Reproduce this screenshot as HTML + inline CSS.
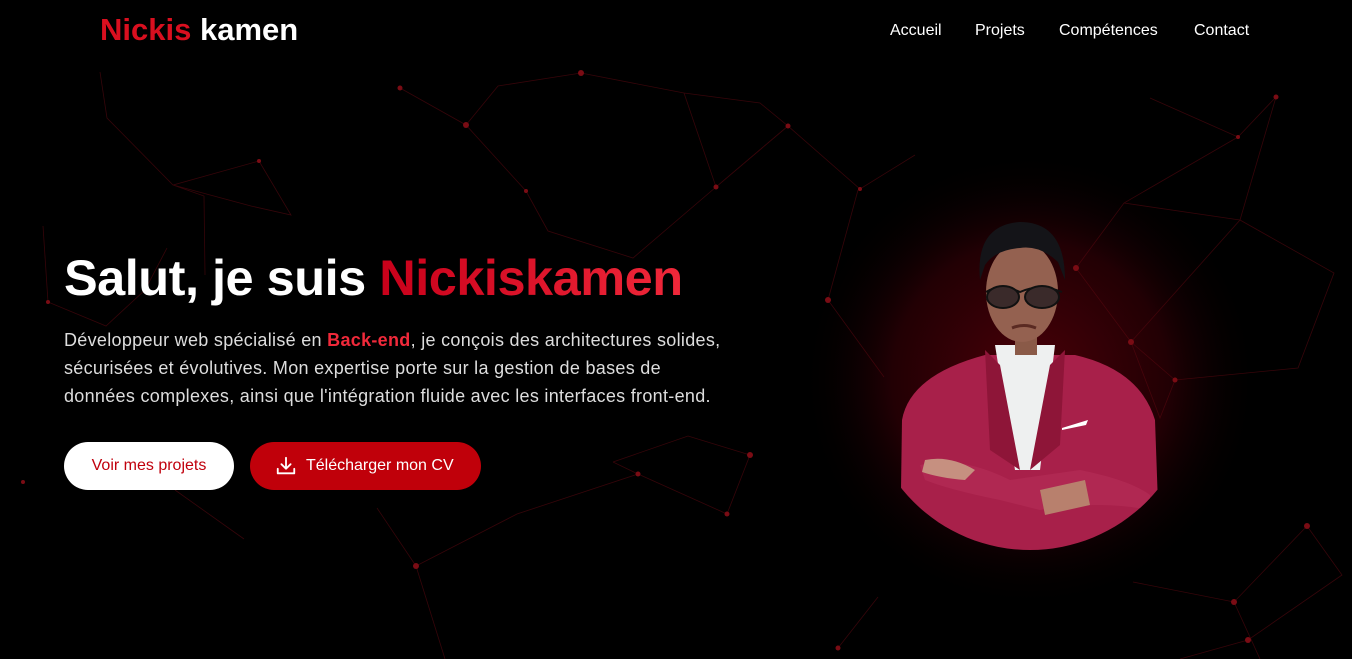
<!DOCTYPE html>
<html><head><meta charset="utf-8"><style>
*{margin:0;padding:0;box-sizing:border-box}
body{width:1352px;height:659px;background:#000;overflow:hidden;font-family:"Liberation Sans",sans-serif;position:relative;color:#fff}
svg.bg{position:absolute;left:0;top:0}
.logo{position:absolute;left:100px;top:12px;font-size:31px;font-weight:bold;letter-spacing:0}
.logo .r{color:#d90f1f}
nav{position:absolute;top:22px;font-size:16px}
nav a{position:absolute;color:#fff;text-decoration:none;white-space:nowrap}
h1{position:absolute;left:64px;top:248px;font-size:50.5px;font-weight:bold;white-space:nowrap;letter-spacing:-0.5px}
h1 span{background:linear-gradient(90deg,#c8001a,#f0283a);-webkit-background-clip:text;background-clip:text;color:transparent}
p{position:absolute;left:64px;top:326px;font-size:18px;letter-spacing:0.3px;line-height:28px;color:#ddd;white-space:nowrap}
p b{color:#f0293a}
.b1{position:absolute;left:64px;top:442px;width:170px;height:48px;border-radius:24px;background:#fff;color:#c0000c;font-size:16px;text-align:center;line-height:48px}
.b2{position:absolute;left:250px;top:442px;width:231px;height:48px;border-radius:24px;background:#c0000a;color:#fff;font-size:16px;line-height:48px;padding-left:56px}
.b2 svg{position:absolute;left:25px;top:13px}
</style></head><body>
<svg class="bg" width="1352" height="659">
<defs>
<radialGradient id="g" cx="1030" cy="380" r="230" gradientUnits="userSpaceOnUse">
<stop offset="0" stop-color="#4a0008"/><stop offset="0.6" stop-color="#220004"/><stop offset="1" stop-color="#000" stop-opacity="0"/></radialGradient>
<clipPath id="c"><circle cx="1030" cy="385" r="165"/></clipPath>
</defs>
<rect x="780" y="140" width="500" height="480" fill="url(#g)"/>
<g stroke="#5a0810" stroke-width="0.8" fill="none" opacity="0.6">
<polyline points="100,72 107,118 173,185 259,161 291,215 251,206 173,185 204,196 205,275"/>
<polyline points="43,226 48,302 106,326 145,290 167,248"/>
<polyline points="400,88 466,125 526,191 548,231 633,258 716,187 788,126 860,189 915,155"/>
<polyline points="466,125 498,86 581,73 684,93 760,103 788,126 716,187 684,93"/>
<polyline points="1150,98 1238,137 1276,97 1240,220 1334,273 1298,368 1175,380 1131,342 1076,268 1124,203 1238,137"/>
<polyline points="1124,203 1240,220 1131,342 1160,418 1175,380"/>
<polyline points="828,300 858,190"/><polyline points="884,377 828,300"/>
<polyline points="613,462 688,436 750,455 727,514 638,474 613,462"/>
<polyline points="377,508 416,566 517,514 638,474"/><polyline points="416,566 445,659"/>
<polyline points="1133,582 1234,602 1307,526 1342,575 1248,640 1180,659"/><polyline points="1234,602 1260,659"/>
<polyline points="838,648 878,597"/><polyline points="175,490 244,539"/>
</g>
<g fill="#7a0c14">
<circle cx="466" cy="125" r="3"/><circle cx="581" cy="73" r="3"/><circle cx="400" cy="88" r="2.5"/><circle cx="788" cy="126" r="2.5"/><circle cx="716" cy="187" r="2.5"/><circle cx="526" cy="191" r="2"/><circle cx="860" cy="189" r="2"/><circle cx="1076" cy="268" r="3"/><circle cx="1131" cy="342" r="3"/><circle cx="1175" cy="380" r="2.5"/><circle cx="1276" cy="97" r="2.5"/><circle cx="1238" cy="137" r="2"/><circle cx="828" cy="300" r="3"/><circle cx="638" cy="474" r="2.5"/><circle cx="750" cy="455" r="3"/><circle cx="727" cy="514" r="2.5"/><circle cx="416" cy="566" r="3"/><circle cx="1307" cy="526" r="3"/><circle cx="1234" cy="602" r="3"/><circle cx="1248" cy="640" r="3"/><circle cx="48" cy="302" r="2"/><circle cx="259" cy="161" r="2"/><circle cx="838" cy="648" r="2.5"/><circle cx="23" cy="482" r="2"/>
</g>
<g clip-path="url(#c)">
<path d="M902,420 Q910,375 985,355 L1075,355 Q1140,370 1155,420 L1160,560 L900,560 Z" fill="#a8204a"/>
<path d="M995,345 L1055,345 L1040,470 L1015,470 Z" fill="#eef0f0"/>
<path d="M985,350 L1000,365 L1020,470 L990,450 Z M1065,350 L1050,365 L1030,470 L1060,445 Z" fill="#8e1538"/>
<path d="M920,465 Q960,455 1010,480 L1080,470 Q1130,480 1150,495 L1150,510 Q1100,500 1040,510 L1000,500 Q950,490 925,480 Z" fill="#b02852"/>
<path d="M925,460 Q950,455 975,470 L965,480 Q940,478 922,472 Z" fill="#c69080"/>
<path d="M1040,490 L1085,480 L1090,505 L1045,515 Z" fill="#b8806d"/>
<path d="M1062,428 L1088,420 L1086,425 L1062,430 Z" fill="#fff"/>
</g>
<rect x="1015" y="330" width="22" height="25" fill="#8a5a48"/>
<ellipse cx="1022" cy="292" rx="36" ry="50" fill="#946150"/>
<path d="M980,280 Q975,225 1020,222 Q1065,222 1065,280 L1058,262 Q1040,245 1020,248 Q995,250 985,265 Z" fill="#141418"/>
<path d="M986,292 Q1000,283 1020,292 Q1040,283 1062,292" stroke="#111" stroke-width="2" fill="none"/>
<ellipse cx="1003" cy="297" rx="16" ry="11" fill="#3a2a2a" stroke="#111" stroke-width="2"/>
<ellipse cx="1042" cy="297" rx="17" ry="11" fill="#3a2a2a" stroke="#111" stroke-width="2"/>
<path d="M1012,328 Q1024,323 1036,328" stroke="#5a2a22" stroke-width="3" fill="none"/>
</svg>
<div class="logo"><span class="r">Nickis</span> kamen</div>
<nav><a style="left:890px">Accueil</a><a style="left:975px">Projets</a><a style="left:1059px">Compétences</a><a style="left:1194px">Contact</a></nav>
<h1>Salut, je suis <span>Nickiskamen</span></h1>
<p>Développeur web spécialisé en <b>Back-end</b>, je conçois des architectures solides,<br>sécurisées et évolutives. Mon expertise porte sur la gestion de bases de<br>données complexes, ainsi que l'intégration fluide avec les interfaces front-end.</p>
<div class="b1">Voir mes projets</div>
<div class="b2"><svg width="22" height="22" viewBox="0 0 24 24" fill="none" stroke="#fff" stroke-width="2" stroke-linecap="round" stroke-linejoin="round"><path d="M12 3v12M7 10l5 5 5-5M3 15v5h18v-5"/></svg>Télécharger mon CV</div>
</body></html>
